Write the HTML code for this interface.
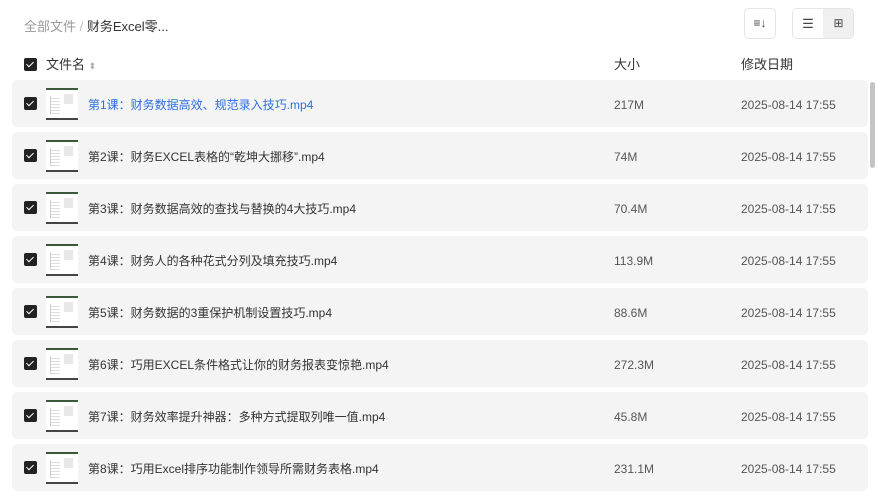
<!DOCTYPE html>
<html><head><meta charset="utf-8"><style>
*{margin:0;padding:0;box-sizing:border-box}
body{width:878px;height:495px;overflow:hidden;background:#fff;font-family:"Liberation Sans","Noto Sans CJK SC",sans-serif;font-size:13px;color:#333;position:relative}
.a{position:absolute}
.cb{position:absolute;width:13px;height:13px;background:#222;border-radius:2px}
.cb:after{content:"";position:absolute;left:4px;top:2px;width:3px;height:6px;border:solid #fff;border-width:0 1.5px 1.5px 0;transform:rotate(45deg)}
.row{position:absolute;left:12px;width:856px;height:47px;background:#f4f4f4;border-radius:5px}
.th{position:absolute;left:34px;top:8px;width:32px;height:32px;background:#fff;border-top:2px solid #3a5a3a;border-bottom:2px solid #444}
.th i{position:absolute;left:4px;top:6px;width:10px;height:18px;border-left:1px solid #ccc;background:repeating-linear-gradient(#fff 0 2px,#ddd 2px 3px)}
.th b{position:absolute;left:18px;top:4px;width:9px;height:10px;background:#e8e8e8}
.nm,.sz,.dt{position:absolute;top:0;line-height:50px;font-size:12px}
.nm{left:76px}
.sz{left:602px;color:#555}
.dt{left:729px;color:#555}
</style></head><body>
<div class="a" style="left:24px;top:16px;font-size:13px;color:#999">全部文件 <span style="color:#bbb">/</span> <span style="color:#333">财务Excel零...</span></div>
<div class="a" style="left:744px;top:8px;width:32px;height:31px;border:1px solid #e4e4e4;border-radius:5px;font-size:12px;text-align:center;line-height:29px;color:#444">≡↓</div>
<div class="a" style="left:792px;top:8px;width:62px;height:31px;border:1px solid #e4e4e4;border-radius:5px;overflow:hidden">
<div class="a" style="left:0;top:0;width:30px;height:29px;background:#fff;text-align:center;line-height:29px;color:#444">☰</div>
<div class="a" style="left:30px;top:0;width:31px;height:29px;background:#f0f0f0;text-align:center;line-height:29px;color:#444;font-size:12px">⊞</div></div>
<div class="cb" style="left:24px;top:58px"></div>
<div class="a" style="left:46px;top:57px;line-height:16px">文件名 <span style="color:#aaa;font-size:9px">⬍</span></div>
<div class="a" style="left:614px;top:57px;line-height:16px">大小</div>
<div class="a" style="left:741px;top:57px;line-height:16px">修改日期</div>
<div class="a" style="left:870px;top:82px;width:5px;height:86px;background:#c4c4c4;border-radius:3px"></div>

<div class="row" style="top:80px"><div class="cb" style="left:12px;top:17px"></div><div class="th"><i></i><b></b></div><div class="nm" style="color:#2f6ee0">第1课：财务数据高效、规范录入技巧.mp4</div><div class="sz">217M</div><div class="dt">2025-08-14 17:55</div></div>
<div class="row" style="top:132px"><div class="cb" style="left:12px;top:17px"></div><div class="th"><i></i><b></b></div><div class="nm">第2课：财务EXCEL表格的“乾坤大挪移”.mp4</div><div class="sz">74M</div><div class="dt">2025-08-14 17:55</div></div>
<div class="row" style="top:184px"><div class="cb" style="left:12px;top:17px"></div><div class="th"><i></i><b></b></div><div class="nm">第3课：财务数据高效的查找与替换的4大技巧.mp4</div><div class="sz">70.4M</div><div class="dt">2025-08-14 17:55</div></div>
<div class="row" style="top:236px"><div class="cb" style="left:12px;top:17px"></div><div class="th"><i></i><b></b></div><div class="nm">第4课：财务人的各种花式分列及填充技巧.mp4</div><div class="sz">113.9M</div><div class="dt">2025-08-14 17:55</div></div>
<div class="row" style="top:288px"><div class="cb" style="left:12px;top:17px"></div><div class="th"><i></i><b></b></div><div class="nm">第5课：财务数据的3重保护机制设置技巧.mp4</div><div class="sz">88.6M</div><div class="dt">2025-08-14 17:55</div></div>
<div class="row" style="top:340px"><div class="cb" style="left:12px;top:17px"></div><div class="th"><i></i><b></b></div><div class="nm">第6课：巧用EXCEL条件格式让你的财务报表变惊艳.mp4</div><div class="sz">272.3M</div><div class="dt">2025-08-14 17:55</div></div>
<div class="row" style="top:392px"><div class="cb" style="left:12px;top:17px"></div><div class="th"><i></i><b></b></div><div class="nm">第7课：财务效率提升神器：多种方式提取列唯一值.mp4</div><div class="sz">45.8M</div><div class="dt">2025-08-14 17:55</div></div>
<div class="row" style="top:444px"><div class="cb" style="left:12px;top:17px"></div><div class="th"><i></i><b></b></div><div class="nm">第8课：巧用Excel排序功能制作领导所需财务表格.mp4</div><div class="sz">231.1M</div><div class="dt">2025-08-14 17:55</div></div>
</body></html>
